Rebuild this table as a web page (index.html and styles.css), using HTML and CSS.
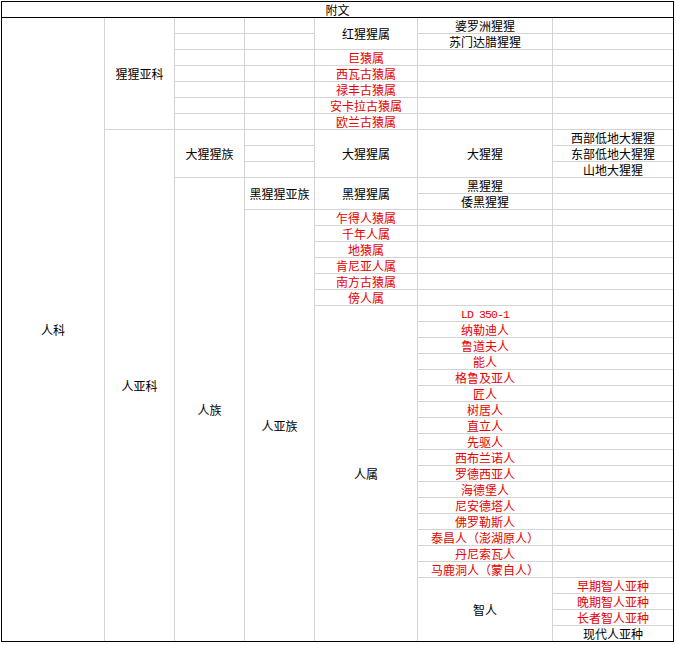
FILE: index.html
```html
<!DOCTYPE html>
<html lang="zh-CN">
<head>
<meta charset="utf-8">
<title>附文</title>
<link rel="stylesheet" href="styles.css">
</head>
<body>
<div class="sheet">
  <div class="title">附文</div>
  <div class="clip">
    <div class="grid">
      <!-- row 1 -->
      <div class="c s39">人科</div>
      <div class="c s7">猩猩亚科</div>
      <div class="c"></div>
      <div class="c"></div>
      <div class="c s2">红猩猩属</div>
      <div class="c">婆罗洲猩猩</div>
      <div class="c"></div>
      <!-- row 2 -->
      <div class="c"></div>
      <div class="c"></div>
      <div class="c">苏门达腊猩猩</div>
      <div class="c"></div>
      <!-- row 3 -->
      <div class="c"></div>
      <div class="c"></div>
      <div class="c red">巨猿属</div>
      <div class="c"></div>
      <div class="c"></div>
      <!-- row 4 -->
      <div class="c"></div>
      <div class="c"></div>
      <div class="c red">西瓦古猿属</div>
      <div class="c"></div>
      <div class="c"></div>
      <!-- row 5 -->
      <div class="c"></div>
      <div class="c"></div>
      <div class="c red">禄丰古猿属</div>
      <div class="c"></div>
      <div class="c"></div>
      <!-- row 6 -->
      <div class="c"></div>
      <div class="c"></div>
      <div class="c red">安卡拉古猿属</div>
      <div class="c"></div>
      <div class="c"></div>
      <!-- row 7 -->
      <div class="c"></div>
      <div class="c"></div>
      <div class="c red">欧兰古猿属</div>
      <div class="c"></div>
      <div class="c"></div>
      <!-- row 8 -->
      <div class="c s32">人亚科</div>
      <div class="c s3">大猩猩族</div>
      <div class="c"></div>
      <div class="c s3">大猩猩属</div>
      <div class="c s3">大猩猩</div>
      <div class="c">西部低地大猩猩</div>
      <!-- row 9 -->
      <div class="c"></div>
      <div class="c">东部低地大猩猩</div>
      <!-- row 10 -->
      <div class="c"></div>
      <div class="c">山地大猩猩</div>
      <!-- row 11 -->
      <div class="c s29">人族</div>
      <div class="c s2">黑猩猩亚族</div>
      <div class="c s2">黑猩猩属</div>
      <div class="c">黑猩猩</div>
      <div class="c"></div>
      <!-- row 12 -->
      <div class="c">倭黑猩猩</div>
      <div class="c"></div>
      <!-- row 13 -->
      <div class="c s27">人亚族</div>
      <div class="c red">乍得人猿属</div>
      <div class="c"></div>
      <div class="c"></div>
      <!-- row 14 -->
      <div class="c red">千年人属</div>
      <div class="c"></div>
      <div class="c"></div>
      <!-- row 15 -->
      <div class="c red">地猿属</div>
      <div class="c"></div>
      <div class="c"></div>
      <!-- row 16 -->
      <div class="c red">肯尼亚人属</div>
      <div class="c"></div>
      <div class="c"></div>
      <!-- row 17 -->
      <div class="c red">南方古猿属</div>
      <div class="c"></div>
      <div class="c"></div>
      <!-- row 18 -->
      <div class="c red">傍人属</div>
      <div class="c"></div>
      <div class="c"></div>
      <!-- row 19 -->
      <div class="c s21">人属</div>
      <div class="c red mono">LD 350-1</div>
      <div class="c"></div>
      <!-- rows 20-35 -->
      <div class="c red">纳勒迪人</div>
      <div class="c"></div>
      <div class="c red">鲁道夫人</div>
      <div class="c"></div>
      <div class="c red">能人</div>
      <div class="c"></div>
      <div class="c red">格鲁及亚人</div>
      <div class="c"></div>
      <div class="c red">匠人</div>
      <div class="c"></div>
      <div class="c red">树居人</div>
      <div class="c"></div>
      <div class="c red">直立人</div>
      <div class="c"></div>
      <div class="c red">先驱人</div>
      <div class="c"></div>
      <div class="c red">西布兰诺人</div>
      <div class="c"></div>
      <div class="c red">罗德西亚人</div>
      <div class="c"></div>
      <div class="c red">海德堡人</div>
      <div class="c"></div>
      <div class="c red">尼安德塔人</div>
      <div class="c"></div>
      <div class="c red">佛罗勒斯人</div>
      <div class="c"></div>
      <div class="c red">泰昌人（澎湖原人）</div>
      <div class="c"></div>
      <div class="c red">丹尼索瓦人</div>
      <div class="c"></div>
      <div class="c red">马鹿洞人（蒙自人）</div>
      <div class="c"></div>
      <!-- rows 36-39 -->
      <div class="c s4">智人</div>
      <div class="c red">早期智人亚种</div>
      <div class="c red">晚期智人亚种</div>
      <div class="c red">长者智人亚种</div>
      <div class="c">现代人亚种</div>
    </div>
  </div>
</div>
</body>
</html>
```

FILE: styles.css
```css
html, body {
  margin: 0;
  padding: 0;
  background: #ffffff;
}

body {
  font-family: "Noto Sans CJK SC", "Noto Sans", sans-serif;
  font-size: 12px;
  color: #000000;
}

.sheet {
  margin: 1px 0 0 1px;
  width: 671px;
  border: 1px solid #000000;
}

.title {
  height: 15px;
  line-height: 15px;
  text-align: center;
  border-bottom: 1px solid #000000;
}

.clip {
  width: 671px;
  height: 623px;
  overflow: hidden;
}

.grid {
  display: grid;
  width: 672px;
  grid-template-columns: 103px 70px 70px 70px 103px 135px 121px;
  grid-auto-rows: 16px;
}

.c {
  box-sizing: border-box;
  border-right: 1px solid #d4d4d4;
  border-bottom: 1px solid #d4d4d4;
  display: flex;
  align-items: center;
  justify-content: center;
  line-height: 15px;
  white-space: nowrap;
  overflow: hidden;
}

.red {
  color: #e60000;
}

.mono {
  font-family: "Liberation Mono", "DejaVu Sans Mono", monospace;
  font-size: 11.5px;
  letter-spacing: -0.9px;
  padding-top: 1px;
}

.s2 { grid-row: span 2; }
.s3 { grid-row: span 3; }
.s4 { grid-row: span 4; }
.s7 { grid-row: span 7; }
.s21 { grid-row: span 21; }
.s27 { grid-row: span 27; }
.s29 { grid-row: span 29; }
.s32 { grid-row: span 32; }
.s39 { grid-row: span 39; }
```
